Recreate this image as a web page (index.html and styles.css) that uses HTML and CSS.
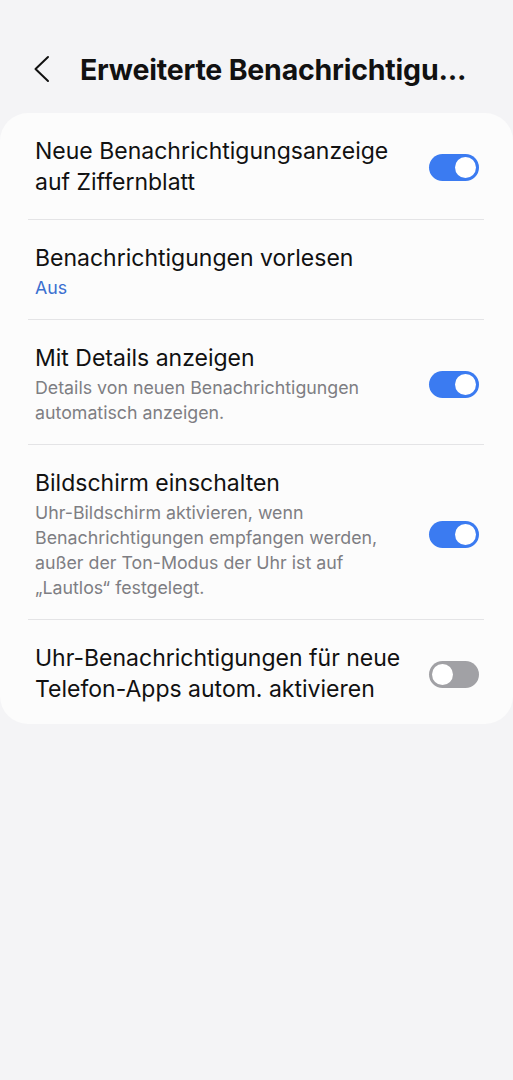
FILE: index.html
```html
<!DOCTYPE html>
<html lang="de">

<head>
    <meta charset="UTF-8">
    <title>Erweiterte Benachrichtigungseinstellungen</title>
    <link rel="stylesheet" href="styles.css">
</head>

<body>
    <div class="header">
        <button class="back_btn" aria-label="Zurück">
            <svg width="20" height="28" viewBox="0 0 20 28">
                <path d="M16 2 L3.5 14 L16 26" fill="none" stroke="#111" stroke-width="2" stroke-linecap="round" stroke-linejoin="round"/>
            </svg>
        </button>
        <h1 class="header_title">Erweiterte Benachrichtigu...</h1>
    </div>

    <div class="card">
        <div class="row first">
            <div class="row_text">
                <div class="row_title">Neue Benachrichtigungsanzeige<br>auf Ziffernblatt</div>
            </div>
            <span class="switch on"><span class="knob"></span></span>
        </div>

        <div class="row">
            <div class="row_text">
                <div class="row_title">Benachrichtigungen vorlesen</div>
                <div class="row_value">Aus</div>
            </div>
        </div>

        <div class="row">
            <div class="row_text">
                <div class="row_title">Mit Details anzeigen</div>
                <div class="row_sub">Details von neuen Benachrichtigungen<br>automatisch anzeigen.</div>
            </div>
            <span class="switch on"><span class="knob"></span></span>
        </div>

        <div class="row">
            <div class="row_text">
                <div class="row_title">Bildschirm einschalten</div>
                <div class="row_sub">Uhr-Bildschirm aktivieren, wenn<br>Benachrichtigungen empfangen werden,<br>außer der Ton-Modus der Uhr ist auf<br>„Lautlos“ festgelegt.</div>
            </div>
            <span class="switch on"><span class="knob"></span></span>
        </div>

        <div class="row last">
            <div class="row_text">
                <div class="row_title">Uhr-Benachrichtigungen für neue<br>Telefon-Apps autom. aktivieren</div>
            </div>
            <span class="switch"><span class="knob"></span></span>
        </div>
    </div>
</body>

</html>
```

FILE: styles.css
```css
html, body {
    margin: 0;
    padding: 0;
}

body {
    background-color: #f4f4f6;
    font-family: "Inter", "Roboto", "Noto Sans", sans-serif;
    color: #111;
    height: 1080px;
}

.header {
    display: flex;
    align-items: center;
    height: 38px;
    padding: 50px 0 0 32px;
}

.back_btn {
    background: none;
    border: 0;
    padding: 0;
    width: 20px;
    height: 28px;
    margin-right: 28px;
    display: flex;
}

.header_title {
    margin: 0;
    font-size: 28.5px;
    font-weight: 700;
    letter-spacing: -0.2px;
    white-space: nowrap;
}

.card {
    background-color: #fcfcfc;
    border-radius: 28px;
    margin-top: 25px;
    padding: 0;
}

.row {
    display: flex;
    align-items: center;
    justify-content: space-between;
    margin: 0 29px 0 28px;
    padding: 23px 5px 19px 7px;
    border-bottom: 1px solid #e4e4e6;
}

.row.first {
    padding-bottom: 21px;
}

.row.last {
    border-bottom: 0;
}

.row_title {
    font-size: 23px;
    line-height: 31px;
}

.row_value {
    margin-top: 2px;
    font-size: 17.8px;
    line-height: 24px;
    color: #3a6fd0;
}

.row_sub {
    margin-top: 2px;
    font-size: 17.8px;
    line-height: 24.7px;
    color: #7e7e83;
}

.switch {
    flex: none;
    position: relative;
    width: 50px;
    height: 27px;
    border-radius: 14px;
    background-color: #a1a1a5;
}

.switch.on {
    background-color: #3b7bf1;
}

.switch .knob {
    position: absolute;
    top: 3px;
    left: 3px;
    width: 21px;
    height: 21px;
    border-radius: 50%;
    background-color: #fff;
}

.switch.on .knob {
    left: 26px;
}
```
